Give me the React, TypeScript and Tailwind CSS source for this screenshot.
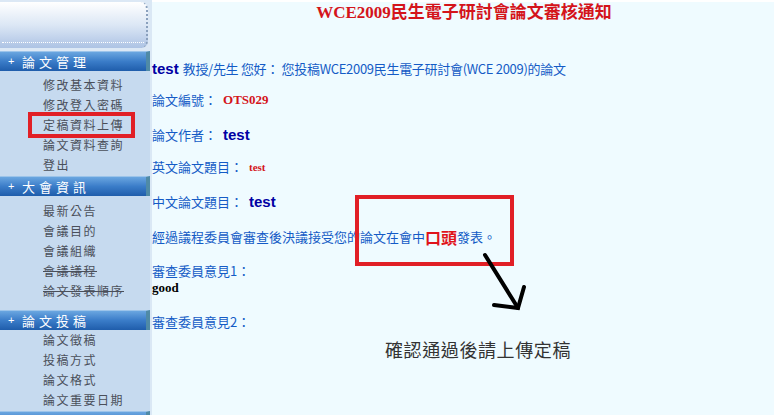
import React from "react";

const cjk = { fontFamily: '"Noto Sans CJK TC", "Liberation Sans", sans-serif' };
const serif = { fontFamily: '"Liberation Serif", "Noto Sans CJK TC", serif' };
const arial = { fontFamily: '"Liberation Sans", Arial, sans-serif' };

type Section = { title: string; items: string[]; pad: string };

const sections: Section[] = [
  {
    title: "論文管理",
    items: ["修改基本資料", "修改登入密碼", "定稿資料上傳", "論文資料查詢", "登出"],
    pad: "pt-[4px] pb-[1px]",
  },
  {
    title: "大會資訊",
    items: ["最新公告", "會議目的", "會議組織", "會議議程", "論文發表順序"],
    pad: "pt-[5px] pb-[9px]",
  },
  {
    title: "論文投稿",
    items: ["論文徵稿", "投稿方式", "論文格式", "論文重要日期"],
    pad: "pt-[0px] pb-[1px]",
  },
];

const Bar = ({ title }: { title: string }) => (
  <div className="h-[20px] flex items-center bg-gradient-to-b from-[#6aa6e0] via-[#3a7cc8] to-[#1f5dab] border-t border-[#9cc4ea] border-r-[4px] border-r-[#4f8aa6] text-white">
    {title && (
      <>
        <span className="w-[22px] pl-[8px] text-[11px]" style={arial}>+</span>
        <span className="text-[13px] tracking-[4px] leading-none" style={cjk}>{title}</span>
      </>
    )}
  </div>
);

const Sidebar = () => (
  <div className="relative w-[152px] shrink-0 bg-[#c6daef] border-r-2 border-[#dae8f5] overflow-hidden">
    {/* logo header */}
    <div className="h-[51px] bg-[#dce8f5] pt-[2px]">
      <div className="h-[46px] w-[148px] rounded-r-[7px] border-r-2 border-dotted border-[#8aa0bd] bg-gradient-to-b from-[#ffffff] via-[#dce7f5] to-[#adc3e4] flex flex-col justify-end pb-[5px]">
        <div className="border-t border-dotted border-white mx-[2px]" />
      </div>
    </div>

    {sections.map((s) => (
      <div key={s.title}>
        <Bar title={s.title} />
        <div className={s.pad}>
          {s.items.map((it) => (
            <div
              key={it}
              className={
                "h-[20px] flex items-center pl-[43px] text-[12px] tracking-[1.5px] text-[#4a4f5a] " +
                (it === "會議議程" || it === "論文發表順序" ? "line-through" : "")
              }
              style={cjk}
            >
              {it}
            </div>
          ))}
        </div>
      </div>
    ))}
    <Bar title="" />

    {/* highlight */}
    <div className="absolute left-[28px] top-[112px] w-[107px] h-[26px] border-[4px] border-[#e11f26]" />
  </div>
);

export default function App() {
  return (
    <div className="flex h-[415px] w-[774px] bg-white overflow-hidden">
      <Sidebar />
      <div className="relative flex-1 bg-[#effbff] border-t-2 border-white text-[13px] text-[#145bc6]" style={cjk}>
        <h1
          className="h-[22px] text-center text-[17px] font-bold text-[#d4141b] leading-[22px] pl-[2px]"
          style={serif}
        >
          WCE2009民生電子研討會論文審核通知
        </h1>

        <div className="mt-[35px] h-[20px] flex items-center">
          <b className="text-[15px] text-[#0000a4] mr-[4px]" style={arial}>test</b>
          <span className="tracking-[-0.3px]">教授/先生 您好： 您投稿WCE2009民生電子研討會(WCE 2009)的論文</span>
        </div>

        <div className="mt-[11px] h-[20px] flex items-center">
          <span>論文編號：</span>
          <b className="ml-[6px] text-[13px] text-[#d4141b]" style={serif}>OTS029</b>
        </div>

        <div className="mt-[15px] h-[20px] flex items-center">
          <span>論文作者：</span>
          <b className="ml-[6px] text-[15px] text-[#0000a4]" style={arial}>test</b>
        </div>

        <div className="mt-[12px] h-[20px] flex items-center">
          <span>英文論文題目：</span>
          <b className="ml-[6px] text-[11px] text-[#d4141b]" style={serif}>test</b>
        </div>

        <div className="mt-[15px] h-[20px] flex items-center">
          <span>中文論文題目：</span>
          <b className="ml-[6px] text-[15px] text-[#0000a4]" style={arial}>test</b>
        </div>

        <div className="mt-[15px] h-[20px] flex items-center">
          <span>經過議程委員會審查後決議接受您的論文在會中</span>
          <b className="text-[16px] text-[#e0141b]">口頭</b>
          <span>發表。</span>
        </div>

        <div className="mt-[15px] h-[18px] flex items-center">審查委員意見1：</div>
        <div className="h-[16px] flex items-center text-[13px] font-bold text-black" style={serif}>
          good
        </div>

        <div className="mt-[16px] h-[20px] flex items-center">審查委員意見2：</div>

        {/* annotations */}
        <div className="absolute left-[203px] top-[193px] w-[159px] h-[71px] border-[4px] border-[#e11f26]" />
        <svg className="absolute left-0 top-0 pointer-events-none" width="622" height="413">
          <g stroke="#000" strokeWidth="4" strokeLinecap="round" fill="none">
            <path d="M333 253 L366 306" />
            <path d="M342 303 L366 306 L372 285" />
          </g>
        </svg>
        <div className="absolute left-[233px] top-[334px] text-[18px] tracking-[0.6px] text-[#333333]" style={cjk}>
          確認通過後請上傳定稿
        </div>
      </div>
    </div>
  );
}
